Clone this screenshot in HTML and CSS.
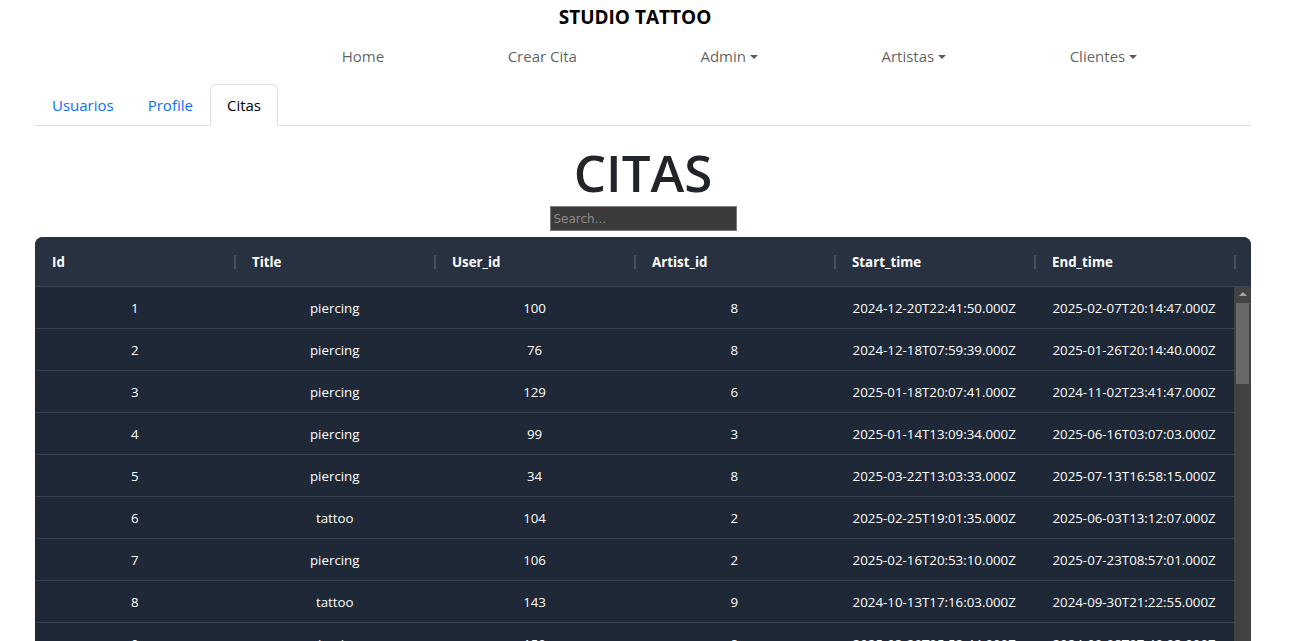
FILE: index.html
```html
<!DOCTYPE html>
<html lang="es">
<head>
<meta charset="utf-8">
<title>Studio Tattoo</title>
<link rel="stylesheet" href="styles.css">
</head>
<body>
<div class="page">
  <header class="site-header">
    <div class="brand">STUDIO TATTOO</div>
    <nav class="main-nav">
      <a class="nav-link" href="#">Home</a>
      <a class="nav-link" href="#">Crear Cita</a>
      <a class="nav-link dropdown" href="#">Admin</a>
      <a class="nav-link dropdown" href="#">Artistas</a>
      <a class="nav-link dropdown" href="#">Clientes</a>
    </nav>
  </header>

  <ul class="tabs">
    <li><a class="tab" href="#">Usuarios</a></li>
    <li><a class="tab" href="#">Profile</a></li>
    <li><a class="tab active" href="#">Citas</a></li>
  </ul>

  <main class="content">
    <h1 class="title">CITAS</h1>
    <input class="search" type="text" placeholder="Search...">

    <div class="grid">
      <div class="grid-head">
        <div class="hcell">Id</div>
        <div class="hcell">Title</div>
        <div class="hcell">User_id</div>
        <div class="hcell">Artist_id</div>
        <div class="hcell">Start_time</div>
        <div class="hcell">End_time</div>
        <div class="hpad"></div>
      </div>
      <div class="grid-body">
        <div class="rows">
          <div class="row"><div class="cell">1</div><div class="cell">piercing</div><div class="cell">100</div><div class="cell">8</div><div class="cell">2024-12-20T22:41:50.000Z</div><div class="cell">2025-02-07T20:14:47.000Z</div></div>
          <div class="row"><div class="cell">2</div><div class="cell">piercing</div><div class="cell">76</div><div class="cell">8</div><div class="cell">2024-12-18T07:59:39.000Z</div><div class="cell">2025-01-26T20:14:40.000Z</div></div>
          <div class="row"><div class="cell">3</div><div class="cell">piercing</div><div class="cell">129</div><div class="cell">6</div><div class="cell">2025-01-18T20:07:41.000Z</div><div class="cell">2024-11-02T23:41:47.000Z</div></div>
          <div class="row"><div class="cell">4</div><div class="cell">piercing</div><div class="cell">99</div><div class="cell">3</div><div class="cell">2025-01-14T13:09:34.000Z</div><div class="cell">2025-06-16T03:07:03.000Z</div></div>
          <div class="row"><div class="cell">5</div><div class="cell">piercing</div><div class="cell">34</div><div class="cell">8</div><div class="cell">2025-03-22T13:03:33.000Z</div><div class="cell">2025-07-13T16:58:15.000Z</div></div>
          <div class="row"><div class="cell">6</div><div class="cell">tattoo</div><div class="cell">104</div><div class="cell">2</div><div class="cell">2025-02-25T19:01:35.000Z</div><div class="cell">2025-06-03T13:12:07.000Z</div></div>
          <div class="row"><div class="cell">7</div><div class="cell">piercing</div><div class="cell">106</div><div class="cell">2</div><div class="cell">2025-02-16T20:53:10.000Z</div><div class="cell">2025-07-23T08:57:01.000Z</div></div>
          <div class="row"><div class="cell">8</div><div class="cell">tattoo</div><div class="cell">143</div><div class="cell">9</div><div class="cell">2024-10-13T17:16:03.000Z</div><div class="cell">2024-09-30T21:22:55.000Z</div></div>
          <div class="row"><div class="cell">9</div><div class="cell">piercing</div><div class="cell">150</div><div class="cell">8</div><div class="cell">2025-03-20T05:52:44.000Z</div><div class="cell">2024-09-08T07:49:03.000Z</div></div>
        </div>
        <div class="vscroll">
          <div class="vscroll-arrow"></div>
          <div class="vscroll-thumb"></div>
        </div>
      </div>
    </div>
  </main>
</div>
</body>
</html>
```

FILE: styles.css
```css
html, body {
  margin: 0;
  padding: 0;
  height: 100%;
  overflow: hidden;
  background: #fff;
}

body {
  font-family: "Open Sans", "Noto Sans", sans-serif;
  color: #212529;
}

.page {
  width: 1216px;
  margin-left: 35px;
}

.site-header {
  padding-right: 16px;
}

.brand {
  text-align: center;
  font-size: 19px;
  font-weight: 700;
  line-height: 28px;
  padding-top: 3px;
  color: #000;
}

.main-nav {
  display: flex;
  justify-content: space-around;
  margin: 5px 0 0 245px;
  width: 919px;
}

.nav-link {
  display: block;
  font-size: 15px;
  line-height: 24px;
  padding: 8px 0;
  color: rgba(0, 0, 0, 0.65);
  text-decoration: none;
}

.dropdown::after {
  content: "";
  display: inline-block;
  margin-left: 4px;
  vertical-align: 3px;
  border-top: 4px solid;
  border-left: 4px solid transparent;
  border-right: 4px solid transparent;
}

.tabs {
  list-style: none;
  margin: 8px 0 0;
  padding: 0;
  display: flex;
  border-bottom: 1px solid #dee2e6;
}

.tab {
  display: block;
  margin-bottom: -1px;
  padding: 8px 16px;
  font-size: 15px;
  line-height: 24px;
  color: #0d6efd;
  text-decoration: none;
  border: 1px solid transparent;
  border-radius: 6px 6px 0 0;
}

.tab.active {
  color: #000;
  background: #fff;
  border-color: #dee2e6 #dee2e6 #fff;
}

.content {
  display: flex;
  flex-direction: column;
  align-items: center;
}

.title {
  margin: 13px 0 0;
  font-size: 51px;
  font-weight: 600;
  line-height: 67px;
  color: #212529;
}

.search {
  box-sizing: border-box;
  width: 187px;
  height: 25px;
  margin: 0;
  padding: 1px 3px;
  background: #3b3b3b;
  border: 1px solid #7a7a7a;
  border-radius: 0;
  font-family: "DejaVu Sans", sans-serif;
  font-size: 12px;
  color: #ddd;
  outline: none;
}

.search::placeholder {
  color: #8a8a8a;
}

.grid {
  align-self: stretch;
  margin-top: 6px;
  background: #1f2836;
  border-radius: 8px 8px 0 0;
  overflow: hidden;
  color: #fff;
  font-size: 13.3px;
}

.grid-head {
  display: flex;
  height: 49px;
  background: #283140;
  border-bottom: 1px solid #3c4452;
}

.hcell {
  position: relative;
  width: 200px;
  box-sizing: border-box;
  padding-left: 17px;
  display: flex;
  align-items: center;
  font-weight: 700;
}

.hcell::after {
  content: "";
  position: absolute;
  right: -1px;
  top: 18px;
  width: 2px;
  height: 14px;
  background: #465061;
}

.hpad {
  flex: 1;
}

.grid-body {
  display: flex;
  height: 360px;
}

.rows {
  width: 1199px;
}

.row {
  display: flex;
  height: 41px;
  border-bottom: 1px solid #3a424f;
}

.cell {
  width: 200px;
  display: flex;
  align-items: center;
  justify-content: center;
}

.vscroll {
  width: 17px;
  background: #424242;
  display: flex;
  flex-direction: column;
  align-items: center;
}

.vscroll-arrow {
  margin-top: 5px;
  width: 0;
  height: 0;
  border-left: 4px solid transparent;
  border-right: 4px solid transparent;
  border-bottom: 4px solid #a3a3a3;
}

.vscroll-thumb {
  margin-top: 7px;
  width: 13px;
  height: 81px;
  background: #686868;
}
```
